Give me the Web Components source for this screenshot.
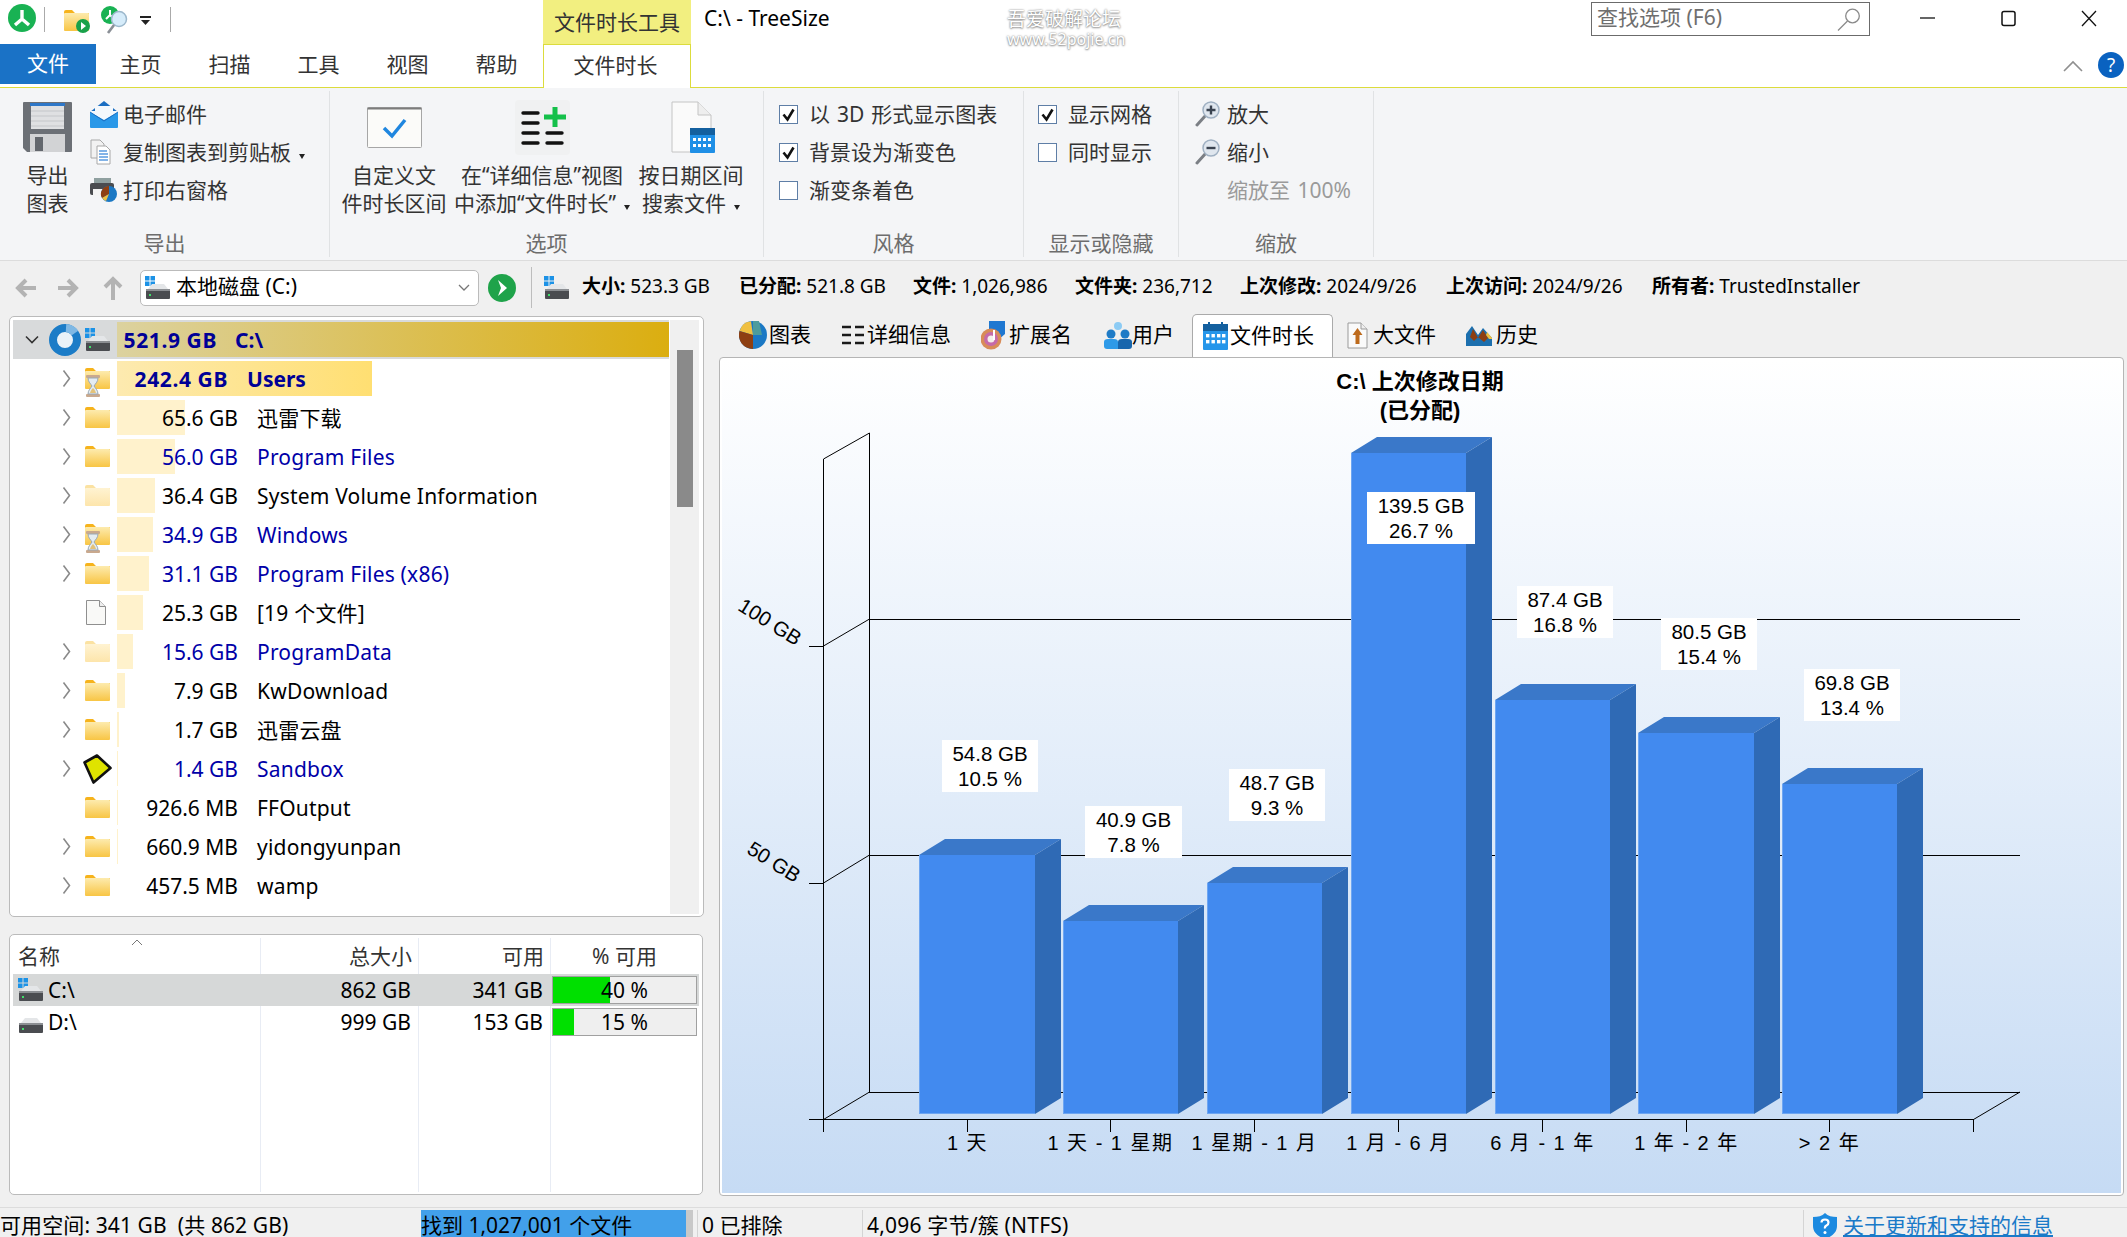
<!DOCTYPE html>
<html lang="zh-CN">
<head>
<meta charset="utf-8">
<title>C:\ - TreeSize</title>
<style>
  html, body { margin: 0; height: 1237px; overflow: hidden; }
  body {
    width: 2127px;
    background: #f0f0f0;
    color: #000;
    font-family: "Noto Sans", "Noto Sans CJK SC", sans-serif;
    font-size: 21px;
    line-height: 28px;
  }
  #main { display: flex; gap: 15px; height: 893px; padding-left: 9px; }
  #left { flex: 0 0 694px; display: flex; flex-direction: column; padding-top: 2px; box-sizing: border-box; }
  #right { flex: 0 0 1405px; display: flex; flex-direction: column; }
  .muted { color: #9a9a9a; word-spacing: 2px; }
</style>
</head>
<body>

<ts-titlebar></ts-titlebar>
<ts-ribbon-tabs></ts-ribbon-tabs>

<ts-ribbon>
  <ts-rib-group label="导出" w="330">
    <ts-rib-large icon="floppy" w="85" lead="5">导出<br>图表</ts-rib-large>
    <div style="display:flex;flex-direction:column;padding-top:4px">
      <ts-rib-item icon="mail">电子邮件</ts-rib-item>
      <ts-rib-item icon="copy">复制图表到剪贴板<ts-caret></ts-caret></ts-rib-item>
      <ts-rib-item icon="printer">打印右窗格</ts-rib-item>
    </div>
  </ts-rib-group>
  <ts-rib-group label="选项" w="434">
    <ts-rib-large icon="calcheck" w="116" lead="6">自定义文<br>件时长区间</ts-rib-large>
    <ts-rib-large icon="listplus" w="180">在“详细信息”视图<br>中添加“文件时长”<ts-caret></ts-caret></ts-rib-large>
    <ts-rib-large icon="doccal" w="118">按日期区间<br>搜索文件<ts-caret></ts-caret></ts-rib-large>
  </ts-rib-group>
  <ts-rib-group label="风格" w="260">
    <div style="display:flex;flex-direction:column;padding:4px 0 0 15px">
      <ts-check checked>以 3D 形式显示图表</ts-check>
      <ts-check checked>背景设为渐变色</ts-check>
      <ts-check>渐变条着色</ts-check>
    </div>
  </ts-rib-group>
  <ts-rib-group label="显示或隐藏" w="155">
    <div style="display:flex;flex-direction:column;padding:4px 0 0 14px">
      <ts-check checked>显示网格</ts-check>
      <ts-check>同时显示</ts-check>
    </div>
  </ts-rib-group>
  <ts-rib-group label="缩放" w="195">
    <div style="display:flex;flex-direction:column;padding:4px 0 0 16px">
      <ts-rib-item icon="zoomin" pad="32">放大</ts-rib-item>
      <ts-rib-item icon="zoomout" pad="32">缩小</ts-rib-item>
      <ts-rib-item pad="32"><span class="muted">缩放至 100%</span></ts-rib-item>
    </div>
  </ts-rib-group>
</ts-ribbon>

<ts-navbar></ts-navbar>

<div id="main">
  <div id="left">
    <ts-tree>
      <ts-tree-row root size="521.9 GB" bar="552" sizew="100" gap="18" icon="windrive" chev="down">C:\</ts-tree-row>
      <ts-tree-row users size="242.4 GB" bar="255" sizew="111" gap="19" icon="folderhour" chev="right">Users</ts-tree-row>
      <ts-tree-row size="65.6 GB" bar="68" icon="folder" chev="right">迅雷下载</ts-tree-row>
      <ts-tree-row size="56.0 GB" bar="58" icon="folder" chev="right" link>Program Files</ts-tree-row>
      <ts-tree-row size="36.4 GB" bar="38" icon="folderpale" chev="right">System Volume Information</ts-tree-row>
      <ts-tree-row size="34.9 GB" bar="36" icon="folderhour" chev="right" link>Windows</ts-tree-row>
      <ts-tree-row size="31.1 GB" bar="32" icon="folder" chev="right" link>Program Files (x86)</ts-tree-row>
      <ts-tree-row size="25.3 GB" bar="26" icon="file">[19 个文件]</ts-tree-row>
      <ts-tree-row size="15.6 GB" bar="16" icon="folderpale" chev="right" link>ProgramData</ts-tree-row>
      <ts-tree-row size="7.9 GB" bar="8" icon="folder" chev="right">KwDownload</ts-tree-row>
      <ts-tree-row size="1.7 GB" bar="2" icon="folder" chev="right">迅雷云盘</ts-tree-row>
      <ts-tree-row size="1.4 GB" bar="1" icon="sandbox" chev="right" link>Sandbox</ts-tree-row>
      <ts-tree-row size="926.6 MB" bar="1" icon="folder">FFOutput</ts-tree-row>
      <ts-tree-row size="660.9 MB" bar="1" icon="folder" chev="right">yidongyunpan</ts-tree-row>
      <ts-tree-row size="457.5 MB" bar="0" icon="folder" chev="right">wamp</ts-tree-row>
    </ts-tree>
    <ts-drives>
      <ts-drive-row selected icon="windrive" name="C:\" total="862 GB" free="341 GB" pct="40"></ts-drive-row>
      <ts-drive-row icon="drive" name="D:\" total="999 GB" free="153 GB" pct="15"></ts-drive-row>
    </ts-drives>
  </div>
  <div id="right">
    <ts-tabs>
      <ts-tab icon="pie" w="103" pad="10" gap="2">图表</ts-tab>
      <ts-tab icon="details" w="139" pad="10" gap="3">详细信息</ts-tab>
      <ts-tab icon="ext" w="123" pad="10" gap="1">扩展名</ts-tab>
      <ts-tab icon="users" w="98" pad="10" gap="0">用户</ts-tab>
      <ts-tab icon="calendar" w="141" pad="11" gap="2" active>文件时长</ts-tab>
      <ts-tab icon="bigfile" w="123" pad="14" gap="5">大文件</ts-tab>
      <ts-tab icon="history" w="100" pad="10" gap="4">历史</ts-tab>
    </ts-tabs>
    <ts-chart></ts-chart>
  </div>
</div>

<ts-statusbar></ts-statusbar>

<script>
const grad = (id, a, b) => `<defs><linearGradient id="${id}" x1="0" y1="0" x2="0" y2="1"><stop offset="0" stop-color="${a}"/><stop offset="1" stop-color="${b}"/></linearGradient></defs>`;

const folderShape = (tab, a, b) => `${grad('fg', a, b)}
  <path d="M0 2q0-2 2-2h6l3 3h14v2H0z" fill="${tab}"/>
  <rect x="0" y="3" width="25" height="18" rx="1" fill="url(#fg)"/>`;

const driveShape = `
  <path d="M3 13l4-5h12l4 5z" fill="#e4e6e8"/>
  <rect x="1" y="13" width="24" height="10" rx="1" fill="#4a4c50"/>
  <rect x="1" y="13" width="24" height="2" fill="#8b8e92"/>
  <rect x="4" y="18" width="2" height="2" fill="#3fe06a"/>`;

const winSquares = `<g fill="#1c92e6"><rect x="0" y="0" width="4.5" height="4.5"/><rect x="5.5" y="0" width="4.5" height="4.5"/><rect x="0" y="5.5" width="4.5" height="4.5"/><rect x="5.5" y="5.5" width="4.5" height="4.5"/></g>`;

const magnifier = sign => `
  <path d="M2 24L11 14" stroke="#7b7f85" stroke-width="3" stroke-linecap="round"/>
  <circle cx="16" cy="9" r="8" fill="#dfe6ee" stroke="#9fb0c2" stroke-width="1.5"/>
  <path d="${sign}" stroke="#3a4350" stroke-width="2.4"/>`;

const ICONS = {
  folder: [25, 21, folderShape('#f6b31c', '#fdebae', '#f8c544')],
  folderpale: [25, 21, folderShape('#fbe2a2', '#fff3d2', '#fde5ab')],
  folderhour: [25, 36, `<g transform="translate(0,7)">${folderShape('#f6b31c', '#fdebae', '#f8c544')}</g>
    <g transform="translate(0,14)">
      <rect x="1" y="0" width="14" height="3" rx="1" fill="#c9a98e"/>
      <rect x="1" y="19" width="14" height="3" rx="1" fill="#c9a98e"/>
      <path d="M3 3h10c0 4-3 6-4 8 1 2 4 4 4 8H3c0-4 3-6 4-8-1-2-4-4-4-8z" fill="#e4ecf2" stroke="#9aa8b4"/>
      <path d="M5 18c1-3 2-4 3-5 1 1 2 2 3 5z" fill="#e3c27a"/>
    </g>`],
  file: [22, 27, `<path d="M1.5 1.5h13l6 6v18h-19z" fill="#f9f9f7" stroke="#8f8f8f"/><path d="M14.5 1.5v6h6" fill="#eee" stroke="#8f8f8f"/>`],
  sandbox: [29, 30, `<path d="M14 1.500L27.500 14 10.500 28.500 1.500 8.500z" fill="#dfe300" stroke="#111" stroke-width="2.6" stroke-linejoin="round"/>`],
  windrive: [25, 24, winSquares + driveShape],
  drive: [25, 24, driveShape],
  ring: [32, 32, `<circle cx="16" cy="16" r="12" fill="#e9f2f8" stroke="#1b7cc7" stroke-width="8"/><path d="M17 4a12 12 0 0 1 9 5" fill="none" stroke="#7fb8e4" stroke-width="8"/>`],
  chevr: [9, 19, `<path d="M1.5 1.5L7.5 9.5 1.5 17.5" fill="none" stroke="#8a8a8a" stroke-width="1.6"/>`],
  chevd: [14, 9, `<path d="M1 1.5L7 7.5 13 1.5" fill="none" stroke="#333" stroke-width="1.6"/>`],
  floppy: [49, 50, `<path d="M1 0h47a1 1 0 011 1v48a1 1 0 01-1 1H4l-4-4V1a1 1 0 011-1z" fill="#6c7076"/>
    <rect x="7" y="1" width="35" height="3" fill="#2e77c8"/>
    <rect x="8" y="4" width="33" height="23" fill="#dfe0e2"/>
    <path d="M8 9h33M8 14h33M8 19h33M8 24h33" stroke="#c4c6c9"/>
    <rect x="7" y="32" width="35" height="18" fill="#d2d3d5"/>
    <rect x="12" y="35" width="8" height="14" fill="#63676d"/>`],
  mail: [28, 27, `<path d="M14 0L28 11H0z" fill="#1b6ec2"/><rect x="5" y="5" width="18" height="13" fill="#f4f8fc"/><rect x="0" y="11" width="28" height="16" rx="1" fill="#2a98e8"/><path d="M0 11l14 8 14-8v-1H0z" fill="#f4f8fc"/><path d="M0 11l14 9 14-9" fill="none" stroke="#1b6ec2"/>`],
  copy: [21, 26, `<path d="M1 1h9l4 4v14H1z" fill="#f2f2f2" stroke="#a8a8a8"/><path d="M7 7h9l4 4v14H7z" fill="#fff" stroke="#a8a8a8"/><path d="M9 12h8M9 15h9M9 18h9M9 21h9" stroke="#5b9be0" stroke-width="1.3"/>`],
  printer: [27, 24, `<rect x="4" y="0" width="17" height="6" fill="#8fa0a0"/><rect x="0" y="5" width="24" height="12" rx="2" fill="#4a4c50"/><rect x="3" y="11" width="17" height="7" fill="#f4f4f4"/><circle cx="19" cy="16" r="8" fill="#1b78c4"/><path d="M19 16V8a8 8 0 00-7 12z" fill="#8e3f12"/><path d="M19 16l-7 4a8 8 0 004 3z" fill="#f0c040"/>`],
  calcheck: [55, 41, `<rect x=".5" y=".5" width="54" height="40" rx="1" fill="#fbfbf9" stroke="#a6a6a6"/><rect x=".5" y=".5" width="54" height="2" fill="#7c7c7c"/><path d="M17 21l8 8 13-16" fill="none" stroke="#1f86df" stroke-width="3.5"/>`],
  listplus: [55, 55, `<rect width="55" height="55" rx="4" fill="#f0f1f2"/>
    <path d="M8 13h15M8 23h15M8 33h15M8 43h15M32 33h15M32 43h15" stroke="#111" stroke-width="3.400" stroke-linecap="round"/>
    <path d="M40 7v20M29 17h22" stroke="#14c04a" stroke-width="5"/>`],
  doccal: [47, 52, `<path d="M4 1h26l13 13v37H4z" fill="#fafafa" stroke="#c4c4c4"/><path d="M30 1v13h13" fill="#eee" stroke="#c4c4c4"/>
    <rect x="22" y="27" width="25" height="25" rx="1" fill="#1f8fe6"/><rect x="22" y="27" width="25" height="7" fill="#14609f"/>
    <g fill="#fff"><rect x="25" y="37" width="3" height="3"/><rect x="30" y="37" width="3" height="3"/><rect x="35" y="37" width="3" height="3"/><rect x="40" y="37" width="3" height="3"/><rect x="25" y="43" width="3" height="3"/><rect x="30" y="43" width="3" height="3"/><rect x="35" y="43" width="3" height="3"/><rect x="40" y="43" width="3" height="3"/></g>`],
  zoomin: [25, 26, magnifier('M16 4.5v9M11.5 9h9')],
  zoomout: [25, 26, magnifier('M11.5 9h9')],
  pie: [28, 28, `<circle cx="14" cy="14" r="14" fill="#1b78c4"/><path d="M14 14L12 .2A14 14 0 00.5 10z" fill="#f0c040"/><path d="M14 14L.5 10A14 14 0 0014 28z" fill="#8e3f12"/><path d="M14 14V0h6l3 14z" fill="#4d9c9c"/>`],
  details: [22, 24, `<path d="M0 4h9M13 4h9M0 12h9M13 12h9M0 20h9M13 20h9" stroke="#1a1a1a" stroke-width="2.4"/>`],
  ext: [27, 29, `<path d="M8 0h16v13l-7 6H8z" fill="#1f78d1"/><circle cx="10" cy="18" r="10.5" fill="#d88c58"/><circle cx="10" cy="18" r="7" fill="#c66aa8"/><circle cx="10" cy="18" r="3.5" fill="#f4f0ea"/><path d="M13 9v10" stroke="#fff" stroke-width="2"/>`],
  users: [28, 27, `<circle cx="14" cy="4" r="4" fill="#8ccbf4"/><circle cx="7" cy="12" r="4.5" fill="#1f7bc6"/><circle cx="21" cy="12" r="4.5" fill="#1f7bc6"/><path d="M0 20q0-3 4-3h6q4 0 4 3v7H3q-3 0-3-3z" fill="#2e9ae8"/><path d="M14 20q0-3 4-3h6q4 0 4 3v4q0 3-3 3H14z" fill="#1866ad"/>`],
  calendar: [25, 28, `<rect y="2" width="25" height="26" rx="1" fill="#2696ea"/><rect y="2" width="25" height="7" fill="#14609f"/><path d="M6 0v5M19 0v5" stroke="#14609f" stroke-width="2"/>
    <g fill="#fff"><rect x="3" y="12" width="3.4" height="3.4"/><rect x="8.5" y="12" width="3.4" height="3.4"/><rect x="14" y="12" width="3.4" height="3.4"/><rect x="19" y="12" width="3.4" height="3.4"/><rect x="3" y="18" width="3.4" height="3.4"/><rect x="8.5" y="18" width="3.4" height="3.4"/><rect x="14" y="18" width="3.4" height="3.4"/><rect x="19" y="18" width="3.4" height="3.4"/></g>`],
  bigfile: [21, 27, `<path d="M1 1h13l6 6v19H1z" fill="#fafafa" stroke="#9a9a9a"/><path d="M14 1v6h6" fill="#eee" stroke="#9a9a9a"/><path d="M10.5 6l5 7h-3v9h-4v-9h-3z" fill="#bd6a1c"/>`],
  history: [26, 22, `<path d="M0 22V10l6-8 6 9 5-7 9 10v8z" fill="#1c6fae"/><path d="M4 13l3-8 5 9 5-8 5 8-4 4-6-5-4 4z" fill="#8e3f12"/><path d="M20 11l3 4 3 0v-1l-5-6z" fill="#f0c040"/>`],
  arrowl: [22, 20, `<path d="M21 10H4M11 2l-8 8 8 8" fill="none" stroke="#b3b3b3" stroke-width="4"/>`],
  arrowr: [22, 20, `<path d="M1 10h17M11 2l8 8-8 8" fill="none" stroke="#b3b3b3" stroke-width="4"/>`],
  arrowu: [22, 24, `<path d="M11 24V4M3 11l8-8 8 8" fill="none" stroke="#b3b3b3" stroke-width="4"/>`],
  play: [28, 28, `<circle cx="14" cy="14" r="14" fill="#1fa34a"/><path d="M10 6l9 8-9 8 3-8z" fill="#fff"/>`],
  tsapp: [28, 28, `<circle cx="14" cy="14" r="14" fill="#19b253"/><path d="M14 6v9M14 15l-7 6M14 15l7 6" stroke="#fff" stroke-width="3.4" fill="none"/>`],
  tsfolder: [26, 23, `${folderShape('#f6b31c', '#fdebae', '#f8c544')}<circle cx="19" cy="16" r="7" fill="#19a14a"/><path d="M17 12l5 4-5 4z" fill="#fff"/>`],
  tssearch: [28, 28, `<circle cx="9" cy="9" r="9" fill="#19b253"/><path d="M9 4v5M9 9l-4 4M9 9l4 4" stroke="#fff" stroke-width="2" fill="none"/><circle cx="18" cy="13" r="7.5" fill="#d6ecfa" stroke="#9cb8cc" stroke-width="1.5"/><path d="M13 19l-6 8" stroke="#8a8f96" stroke-width="2.6"/>`],
  lens: [24, 23, `<circle cx="15.5" cy="8" r="6.8" fill="none" stroke="#8a8a8a" stroke-width="1.3"/><path d="M10.5 13L1 22.5" stroke="#8a8a8a" stroke-width="1.3"/>`],
  shield: [24, 26, `<path d="M12 0c3 3 7 4 12 4v9c0 7-6 11-12 13C6 24 0 20 0 13V4c5 0 9-1 12-4z" fill="#1c8ae0"/><path d="M8.5 9.5q0-3 3.5-3t3.5 3q0 2-2 3t-1.5 3" fill="none" stroke="#fff" stroke-width="2.2"/><circle cx="12" cy="19.5" r="1.5" fill="#fff"/>`],
};

class TsIcon extends HTMLElement {
  connectedCallback() {
    if (this.shadowRoot) return;
    const [w, h, body] = ICONS[this.getAttribute('name')];
    this.attachShadow({mode: 'open'}).innerHTML = `
      <style>:host { display: block; flex: none; width: ${w}px; height: ${h}px; line-height: 0; white-space: normal; }</style>
      <svg width="${w}" height="${h}" viewBox="0 0 ${w} ${h}">${body}</svg>`;
  }
}

class TsCaret extends HTMLElement {
  connectedCallback() {
    if (this.shadowRoot) return;
    this.attachShadow({mode: 'open'}).innerHTML = `
      <style>
        :host {
          display: inline-block;
          width: 0;
          height: 0;
          margin-left: 8px;
          vertical-align: 1px;
          border: 3.5px solid transparent;
          border-top: 5px solid #222;
          border-bottom: 0;
        }
      </style>`;
  }
}

class TsTitlebar extends HTMLElement {
  connectedCallback() {
    if (this.shadowRoot) return;
    this.attachShadow({mode: 'open'}).innerHTML = `
      <style>
        :host { display: flex; height: 44px; background: #fff; line-height: 28px; }
        #qat { flex: 0 0 543px; display: flex; align-items: flex-start; }
        .sep { flex: none; width: 1px; height: 25px; background: #aaa; margin-top: 7px; }
        #ctx {
          flex: 0 0 148px;
          background: #f2ef80;
          color: #333;
          text-align: center;
          line-height: 44px;
        }
        #title { flex: 0 0 316px; padding-left: 13px; box-sizing: border-box; line-height: 36px; }
        #mark {
          flex: 0 0 584px;
          color: #fff;
          font-size: 19px;
          line-height: 20px;
          padding-top: 9px;
          text-shadow: 0 0 2px #777, 0 1px 2px #999;
        }
        #mark div:last-child { font-size: 16px; }
        #search {
          flex: 0 0 279px;
          height: 34px;
          margin-top: 2px;
          box-sizing: border-box;
          border: 1px solid #6b6b6b;
          display: flex;
          align-items: center;
          justify-content: space-between;
          padding: 0 8px 0 5px;
          color: #6f6f6f;
          line-height: 30px;
        }
        #search span { margin-top: -5px; }
        #win { flex: 1; position: relative; display: flex; }
        #win svg { flex: none; margin-top: 10px; }
      </style>
      <div id="qat">
        <ts-icon name="tsapp" style="margin:4px 0 0 8px"></ts-icon>
        <div class="sep" style="margin-left:8px"></div>
        <ts-icon name="tsfolder" style="margin:10px 0 0 19px"></ts-icon>
        <ts-icon name="tssearch" style="margin:6px 0 0 11px"></ts-icon>
        <svg width="12" height="12" style="margin:16px 0 0 11px"><rect x="0" y="0" width="11" height="2" fill="#222"/><path d="M1 4h9l-4.500 5z" fill="#222"/></svg>
        <div class="sep" style="margin-left:18px"></div>
      </div>
      <div id="ctx">文件时长工具</div>
      <div id="title">C:\\ - TreeSize</div>
      <div id="mark"><div>吾爱破解论坛</div><div>www.52pojie.cn</div></div>
      <div id="search"><span>查找选项 (F6)</span><ts-icon name="lens"></ts-icon></div>
      <div id="win">
        <svg width="16" height="17" style="margin-left:50px"><path d="M0 8h15" stroke="#111" stroke-width="1.3"/></svg>
        <svg width="16" height="17" style="margin-left:65px"><rect x="1" y="1.500" width="13" height="14" rx="2" fill="none" stroke="#111" stroke-width="1.500"/></svg>
        <svg width="17" height="17" style="margin-left:64px"><path d="M1 1l14 15M15 1L1 16" stroke="#111" stroke-width="1.300"/></svg>
      </div>`;
  }
}

class TsRibbonTabs extends HTMLElement {
  connectedCallback() {
    if (this.shadowRoot) return;
    const tabs = ['主页', '扫描', '工具', '视图', '帮助'].map(t => `<div class="tab">${t}</div>`).join('');
    this.attachShadow({mode: 'open'}).innerHTML = `
      <style>
        :host { display: flex; height: 44px; background: #fff; box-shadow: inset 0 -1px #dcdc3c; line-height: 41px; color: #333; }
        #file { flex: 0 0 96px; height: 40px; line-height: 39px; background: #1a72c6; color: #fff; text-align: center; }
        .tab { flex: 0 0 89px; text-align: center; }
        #active {
          flex: 0 0 148px;
          margin-left: 2px;
          box-sizing: border-box;
          height: 44px;
          background: #fff;
          border: 1px solid #dcdc3c;
          border-bottom: 0;
          text-align: center;
          padding-right: 3px;
        }
        #right { flex: 1; display: flex; justify-content: flex-end; align-items: flex-start; padding: 8px 3px 0 0; }
        #help {
          width: 26px;
          height: 26px;
          margin-left: 15px;
          border-radius: 50%;
          background: #0a62c0;
          color: #fff;
          text-align: center;
          font-size: 19px;
          line-height: 26px;
        }
        #right svg { margin-top: 8px; }
      </style>
      <div id="file">文件</div>
      ${tabs}
      <div id="active">文件时长</div>
      <div id="right">
        <svg width="20" height="12"><path d="M1 11l9-9 9 9" fill="none" stroke="#8f8f8f" stroke-width="1.600"/></svg>
        <div id="help">?</div>
      </div>`;
  }
}

class TsRibbon extends HTMLElement {
  connectedCallback() {
    if (this.shadowRoot) return;
    this.attachShadow({mode: 'open'}).innerHTML = `
      <style>
        :host {
          display: flex;
          height: 173px;
          box-sizing: border-box;
          padding: 3px 0 3px;
          background: #f4f5f7;
          border-bottom: 1px solid #dcdcdc;
          color: #333;
        }
      </style>
      <slot></slot>`;
  }
}

class TsRibGroup extends HTMLElement {
  connectedCallback() {
    if (this.shadowRoot) return;
    const w = this.getAttribute('w');
    this.attachShadow({mode: 'open'}).innerHTML = `
      <style>
        :host {
          flex: 0 0 ${w}px;
          box-sizing: border-box;
          display: flex;
          flex-direction: column;
          border-right: 1px solid #e0e2e4;
        }
        #body { flex: 1; display: flex; align-items: flex-start; }
        #label { height: 28px; line-height: 28px; text-align: center; color: #6d6d6d; }
      </style>
      <div id="body"><slot></slot></div>
      <div id="label">${this.getAttribute('label')}</div>`;
  }
}

class TsRibLarge extends HTMLElement {
  connectedCallback() {
    if (this.shadowRoot) return;
    const lead = this.getAttribute('lead') || 0;
    this.attachShadow({mode: 'open'}).innerHTML = `
      <style>
        :host {
          flex: 0 0 ${this.getAttribute('w')}px;
          margin-left: ${lead}px;
          display: flex;
          flex-direction: column;
          align-items: center;
          text-align: center;
          white-space: nowrap;
          line-height: 28px;
        }
        #icon { height: 70px; display: flex; align-items: center; margin-top: 1px; margin-bottom: -1px; }
      </style>
      <div id="icon"><ts-icon name="${this.getAttribute('icon')}"></ts-icon></div>
      <div><slot></slot></div>`;
  }
}

class TsRibItem extends HTMLElement {
  connectedCallback() {
    if (this.shadowRoot) return;
    const name = this.getAttribute('icon');
    const pad = this.getAttribute('pad') || 33;
    this.attachShadow({mode: 'open'}).innerHTML = `
      <style>
        :host { display: flex; align-items: center; height: 38px; white-space: nowrap; }
        #icon { flex: 0 0 ${pad}px; }
      </style>
      <div id="icon">${name ? `<ts-icon name="${name}"></ts-icon>` : ''}</div>
      <div><slot></slot></div>`;
  }
}

class TsCheck extends HTMLElement {
  connectedCallback() {
    if (this.shadowRoot) return;
    const mark = this.hasAttribute('checked')
      ? '<path d="M4.500 9.500l4 5 6-10" fill="none" stroke="#111" stroke-width="2.600"/>' : '';
    this.attachShadow({mode: 'open'}).innerHTML = `
      <style>
        :host { display: flex; align-items: center; gap: 11px; height: 38px; white-space: nowrap; word-spacing: 1.500px; }
        svg { flex: none; }
      </style>
      <svg width="19" height="19"><rect x=".5" y=".5" width="18" height="18" fill="#fff" stroke="#5e7ea6"/>${mark}</svg>
      <div><slot></slot></div>`;
  }
}

class TsNavbar extends HTMLElement {
  connectedCallback() {
    if (this.shadowRoot) return;
    const stats = [
      ['大小:', '523.3 GB', 157], ['已分配:', '521.8 GB', 174], ['文件:', '1,026,986', 162],
      ['文件夹:', '236,712', 165], ['上次修改:', '2024/9/26', 206], ['上次访问:', '2024/9/26', 206],
      ['所有者:', 'TrustedInstaller', 230],
    ].map(([k, v, w]) => `<div class="stat" style="flex-basis:${w}px"><b>${k}</b> ${v}</div>`).join('');
    this.attachShadow({mode: 'open'}).innerHTML = `
      <style>
        :host { display: flex; align-items: center; height: 53px; font-size: 19px; line-height: 26px; }
        #combo {
          flex: 0 0 339px;
          height: 36px;
          margin-left: 16px;
          box-sizing: border-box;
          background: #fff;
          border: 1px solid #bbb;
          border-radius: 5px;
          display: flex;
          align-items: center;
          padding: 0 8px 0 4px;
          font-size: 21px;
        }
        #combo span { flex: 1; padding-left: 6px; margin-top: -3px; }
        #sep { flex: none; width: 1px; height: 41px; background: #bdbdbd; margin: 0 12px 0 15px; }
        .stat { flex: none; white-space: nowrap; margin-top: -3px; }
        b { font-weight: 700; }
      </style>
      <ts-icon name="arrowl" style="margin-left:15px"></ts-icon>
      <ts-icon name="arrowr" style="margin-left:20px"></ts-icon>
      <ts-icon name="arrowu" style="margin-left:23px"></ts-icon>
      <div id="combo"><ts-icon name="windrive"></ts-icon><span>本地磁盘 (C:)</span>
        <svg width="12" height="8"><path d="M1 1l5 5 5-5" fill="none" stroke="#777" stroke-width="1.300"/></svg></div>
      <ts-icon name="play" style="margin-left:9px"></ts-icon>
      <div id="sep"></div>
      <ts-icon name="windrive" style="margin-right:13px"></ts-icon>
      ${stats}`;
  }
}

class TsTree extends HTMLElement {
  connectedCallback() {
    if (this.shadowRoot) return;
    this.attachShadow({mode: 'open'}).innerHTML = `
      <style>
        :host {
          display: flex;
          flex: 0 0 601px;
          box-sizing: border-box;
          background: #fff;
          border: 1px solid #bbb;
          border-radius: 5px;
          padding: 3px 4px 2px 3px;
          overflow: hidden;
        }
        #rows { flex: 0 0 656px; display: flex; flex-direction: column; }
        #track { flex: 1; margin-left: 1px; background: #f0f0f0; padding: 30px 6px 0 7px; }
        #thumb { height: 157px; background: #8a8a8a; }
      </style>
      <div id="rows"><slot></slot></div>
      <div id="track"><div id="thumb"></div></div>`;
  }
}

class TsTreeRow extends HTMLElement {
  connectedCallback() {
    if (this.shadowRoot) return;
    const chev = this.getAttribute('chev');
    const root = this.hasAttribute('root');
    const users = this.hasAttribute('users');
    const strong = root || users;
    const icon = this.getAttribute('icon');
    const sizew = this.getAttribute('sizew') || 121;
    const gap = this.getAttribute('gap') || 19;
    const fill = root ? 'linear-gradient(90deg, #dcd29f, #dbae10)'
      : users ? 'linear-gradient(90deg, #fdeab0, #ffdf72)'
      : 'linear-gradient(#fff2cc, #fff2cc)';
    const chevIcon = chev === 'down'
      ? '<ts-icon name="chevd" style="margin-left:12px"></ts-icon><ts-icon name="ring" style="margin-left:10px"></ts-icon>'
      : chev === 'right' ? '<ts-icon name="chevr" style="margin-left:49px"></ts-icon>' : '';
    const color = strong ? '#000096' : this.hasAttribute('link') ? '#0000a8' : '#000';
    const iconLeft = root ? 0 : icon === 'sandbox' ? 12 : 14;
    this.attachShadow({mode: 'open'}).innerHTML = `
      <style>
        :host {
          flex: 0 0 39px;
          display: flex;
          align-items: center;
          color: ${color};
          font-weight: ${strong ? 700 : 400};
          background: ${root ? '#d8dadb' : 'none'};
          line-height: 37px;
          white-space: nowrap;
        }
        #chev { flex: 0 0 ${root ? 72 : 58}px; display: flex; align-items: center; }
        #icon { flex: 0 0 ${root ? 32 : 46}px; display: flex; }
        #gauge {
          flex: 1;
          height: 35px;
          display: flex;
          gap: ${gap}px;
          background: ${fill} no-repeat;
          background-size: ${this.getAttribute('bar')}px 35px;
        }
        #size { flex: 0 0 ${sizew}px; text-align: right; letter-spacing: ${strong ? .6 : 0}px; }
        #name { letter-spacing: ${strong ? 0 : .2}px; }
      </style>
      <div id="chev">${chevIcon}</div>
      <div id="icon"><ts-icon name="${icon}" style="margin-left:${iconLeft}px"></ts-icon></div>
      <div id="gauge"><span id="size">${this.getAttribute('size')}</span><span id="name"><slot></slot></span></div>`;
  }
}

class TsDrives extends HTMLElement {
  connectedCallback() {
    if (this.shadowRoot) return;
    this.attachShadow({mode: 'open'}).innerHTML = `
      <style>
        :host {
          display: block;
          flex: 0 0 261px;
          margin: 17px 1px 0 0;
          box-sizing: border-box;
          background: #fff;
          border: 1px solid #bbb;
          border-radius: 5px;
          padding: 3px 3px 2px 3px;
        }
        #wrap {
          height: 100%;
          background:
            linear-gradient(#e8ecf4, #e8ecf4) 247px 0 / 1px 100% no-repeat,
            linear-gradient(#e8ecf4, #e8ecf4) 405px 0 / 1px 100% no-repeat,
            linear-gradient(#e8ecf4, #e8ecf4) 537px 0 / 1px 100% no-repeat;
        }
        #head { display: grid; grid-template-columns: 247px 158px 132px 149px; height: 36px; line-height: 36px; color: #333; }
        #head div { padding-right: 6px; text-align: right; box-sizing: border-box; }
        #head div:first-child { text-align: left; padding-left: 5px; position: relative; }
        #head div:last-child { text-align: center; padding: 0; }
        #sort { position: absolute; left: 118px; top: 0; }
      </style>
      <div id="wrap">
        <div id="head">
          <div>名称<svg id="sort" width="12" height="9"><path d="M1 7l5-5 5 5" fill="none" stroke="#777"/></svg></div>
          <div>总大小</div><div>可用</div><div>% 可用</div>
        </div>
        <slot></slot>
      </div>`;
  }
}

class TsDriveRow extends HTMLElement {
  connectedCallback() {
    if (this.shadowRoot) return;
    const pct = +this.getAttribute('pct');
    this.attachShadow({mode: 'open'}).innerHTML = `
      <style>
        :host {
          display: grid;
          grid-template-columns: 247px 158px 132px 149px;
          height: 32px;
          line-height: 32px;
          background: ${this.hasAttribute('selected') ? '#d6d8d8' : 'transparent'};
        }
        #name { display: flex; align-items: center; gap: 5px; padding-left: 5px; }
        .num { text-align: right; padding-right: 7px; }
        #pct {
          margin: 2px 2px 2px 2px;
          box-sizing: border-box;
          border: 1px solid #a0a0a0;
          background: linear-gradient(#00e000, #00e000) no-repeat #efefef;
          background-size: ${pct === 40 ? 57 : 21}px 100%;
          text-align: center;
          line-height: 26px;
        }
      </style>
      <div id="name"><ts-icon name="${this.getAttribute('icon')}"></ts-icon>${this.getAttribute('name')}</div>
      <div class="num">${this.getAttribute('total')}</div>
      <div class="num">${this.getAttribute('free')}</div>
      <div id="pct">${pct} %</div>`;
  }
}

class TsTabs extends HTMLElement {
  connectedCallback() {
    if (this.shadowRoot) return;
    this.attachShadow({mode: 'open'}).innerHTML = `
      <style>
        :host { display: flex; flex: 0 0 42px; padding-left: 10px; position: relative; z-index: 1; }
      </style>
      <slot></slot>`;
  }
}

class TsTab extends HTMLElement {
  connectedCallback() {
    if (this.shadowRoot) return;
    const active = this.hasAttribute('active');
    this.attachShadow({mode: 'open'}).innerHTML = `
      <style>
        :host {
          flex: 0 0 ${this.getAttribute('w')}px;
          box-sizing: border-box;
          height: ${active ? 43 : 42}px;
          display: flex;
          align-items: center;
          gap: ${this.getAttribute('gap')}px;
          padding-left: ${this.getAttribute('pad') - (active ? 1 : 0)}px;
          white-space: nowrap;
          ${active ? 'background:#fff;border:1px solid #aaa;border-bottom:0;border-radius:5px 5px 0 0;' : ''}
        }
        div { margin-top: -2px; }
      </style>
      <ts-icon name="${this.getAttribute('icon')}"></ts-icon>
      <div><slot></slot></div>`;
  }
}

class TsChart extends HTMLElement {
  connectedCallback() {
    if (this.shadowRoot) return;
    const bars = [
      [919, 1035, 855], [1063, 1178, 921], [1207, 1322, 883], [1351, 1466, 453],
      [1495, 1610, 700], [1638, 1754, 733], [1782, 1897, 784],
    ];
    const labels = [
      [942, 740, 96, '54.8 GB', '10.5 %'], [1085, 806, 97, '40.9 GB', '7.8 %'],
      [1229, 769, 96, '48.7 GB', '9.3 %'], [1367, 492, 108, '139.5 GB', '26.7 %'],
      [1517, 586, 96, '87.4 GB', '16.8 %'], [1661, 618, 96, '80.5 GB', '15.4 %'],
      [1804, 669, 96, '69.8 GB', '13.4 %'],
    ];
    const ticks = [
      [967.5, '1 天'], [1110.5, '1 天 - 1 星期'], [1254.5, '1 星期 - 1 月'], [1398.5, '1 月 - 6 月'],
      [1542.5, '6 月 - 1 年'], [1686.5, '1 年 - 2 年'], [1829.5, '> 2 年'],
    ];

    const barSvg = bars.map(([a, b, t]) => `
      <polygon points="${a},${t} ${a + 26},${t - 16} ${b + 26},${t - 16} ${b},${t}" fill="#3a78c9"/>
      <polygon points="${b},${t} ${b + 26},${t - 16} ${b + 26},1098 ${b},1114" fill="#2f6ab5"/>
      <rect x="${a}" y="${t}" width="${b - a}" height="${1114 - t}" fill="#428aef"/>
      <path d="M${a + .5} 1114V${t}M${a} 1113.500H${b}" stroke="#6ea6f2" fill="none"/>`).join('');

    const labelSvg = labels.map(([x, y, w, a, b]) => `
      <rect x="${x}" y="${y}" width="${w}" height="52" fill="#fff"/>
      <text x="${x + w / 2}" y="${y + 21}" text-anchor="middle">${a}</text>
      <text x="${x + w / 2}" y="${y + 46}" text-anchor="middle">${b}</text>`).join('');

    const tickSvg = ticks.map(([x, t]) => `
      <path d="M${x} 1119V1132" stroke="#000"/>
      <text class="cat" x="${x}" y="1150" text-anchor="middle" xml:space="preserve">${t}</text>`).join('');

    this.attachShadow({mode: 'open'}).innerHTML = `
      <style>
        :host {
          display: block;
          flex: 0 0 839px;
          box-sizing: border-box;
          background: #fff;
          border: 1px solid #b5b5b5;
          border-radius: 4px;
          padding: 1px 2px 2px;
        }
        svg { display: block; }
        text { font-family: "Liberation Sans", "Noto Sans CJK SC", sans-serif; font-size: 20.5px; fill: #000; }
        .title { font-weight: 700; font-size: 22px; }
        .cat { font-size: 20px; letter-spacing: 1.500px; }
        .ax { font-size: 20.5px; }
      </style>
      <svg width="1399" height="834" viewBox="722 359 1399 834">
        <defs><linearGradient id="bg" x1="0" y1="0" x2="0" y2="1"><stop offset="0" stop-color="#fff"/><stop offset="1" stop-color="#c6dbf4"/></linearGradient></defs>
        <rect x="722" y="359" width="1399" height="834" fill="url(#bg)"/>
        <g fill="none" stroke="#000">
          <path d="M823.500 459L869.500 433V1092"/>
          <path d="M869 619.500H2020M869 855.500H2020M869 1092.500H2020"/>
          <path d="M823.500 646L869.500 619M823.500 883L869.500 855M823.500 1119.500L869.500 1092M1973.500 1119.500L2020 1092"/>
          <path d="M823.500 459V1132M809 646.500H823M809 883.500H823M809 1119.500H1973.500M1973.500 1119V1132"/>
        </g>
        ${barSvg}
        ${tickSvg}
        ${labelSvg}
        <text class="ax" text-anchor="middle" transform="translate(770 622) rotate(32)" dy="7">100 GB</text>
        <text class="ax" text-anchor="middle" transform="translate(774 862) rotate(32)" dy="7">50 GB</text>
        <text class="title" x="1420" y="389" text-anchor="middle">C:\\ 上次修改日期</text>
        <text class="title" x="1420" y="418" text-anchor="middle">(已分配)</text>
      </svg>`;
  }
}

class TsStatusbar extends HTMLElement {
  connectedCallback() {
    if (this.shadowRoot) return;
    this.attachShadow({mode: 'open'}).innerHTML = `
      <style>
        :host {
          display: flex;
          height: 30px;
          box-sizing: border-box;
          border-top: 1px solid #dcdcdc;
          padding-top: 2px;
          line-height: 22px;
          white-space: pre;
          overflow: hidden;
          background: #f0f0f0;
        }
        :host > div { padding-top: 4px; }
        #free { flex: 0 0 421px; letter-spacing: .1px; }
        #found { flex: 0 0 272px; background: linear-gradient(90deg, #42a0ea 265px, #c8c8c8 265px); }
        #excl { flex: 0 0 165px; margin-left: 4px; border-left: 1px solid #d4d4d4; padding-left: 4px; box-sizing: border-box; }
        #clus { flex: 0 0 941px; border-left: 1px solid #d4d4d4; padding-left: 4px; box-sizing: border-box; letter-spacing: .2px; }
        #link { flex: 1; display: flex; gap: 6px; border-left: 1px solid #d4d4d4; padding-left: 9px; color: #1a7ac8; }
        #link span { text-decoration: underline; }
        #link ts-icon { margin-top: -1px; }
      </style>
      <div id="free">可用空间: 341 GB  (共 862 GB)</div>
      <div id="found">找到 1,027,001 个文件</div>
      <div id="excl">0 已排除</div>
      <div id="clus">4,096 字节/簇 (NTFS)</div>
      <div id="link"><ts-icon name="shield"></ts-icon><span>关于更新和支持的信息</span></div>`;
  }
}

customElements.define('ts-icon', TsIcon);
customElements.define('ts-caret', TsCaret);
customElements.define('ts-titlebar', TsTitlebar);
customElements.define('ts-ribbon-tabs', TsRibbonTabs);
customElements.define('ts-ribbon', TsRibbon);
customElements.define('ts-rib-group', TsRibGroup);
customElements.define('ts-rib-large', TsRibLarge);
customElements.define('ts-rib-item', TsRibItem);
customElements.define('ts-check', TsCheck);
customElements.define('ts-navbar', TsNavbar);
customElements.define('ts-tree', TsTree);
customElements.define('ts-tree-row', TsTreeRow);
customElements.define('ts-drives', TsDrives);
customElements.define('ts-drive-row', TsDriveRow);
customElements.define('ts-tabs', TsTabs);
customElements.define('ts-tab', TsTab);
customElements.define('ts-chart', TsChart);
customElements.define('ts-statusbar', TsStatusbar);
</script>
</body>
</html>
